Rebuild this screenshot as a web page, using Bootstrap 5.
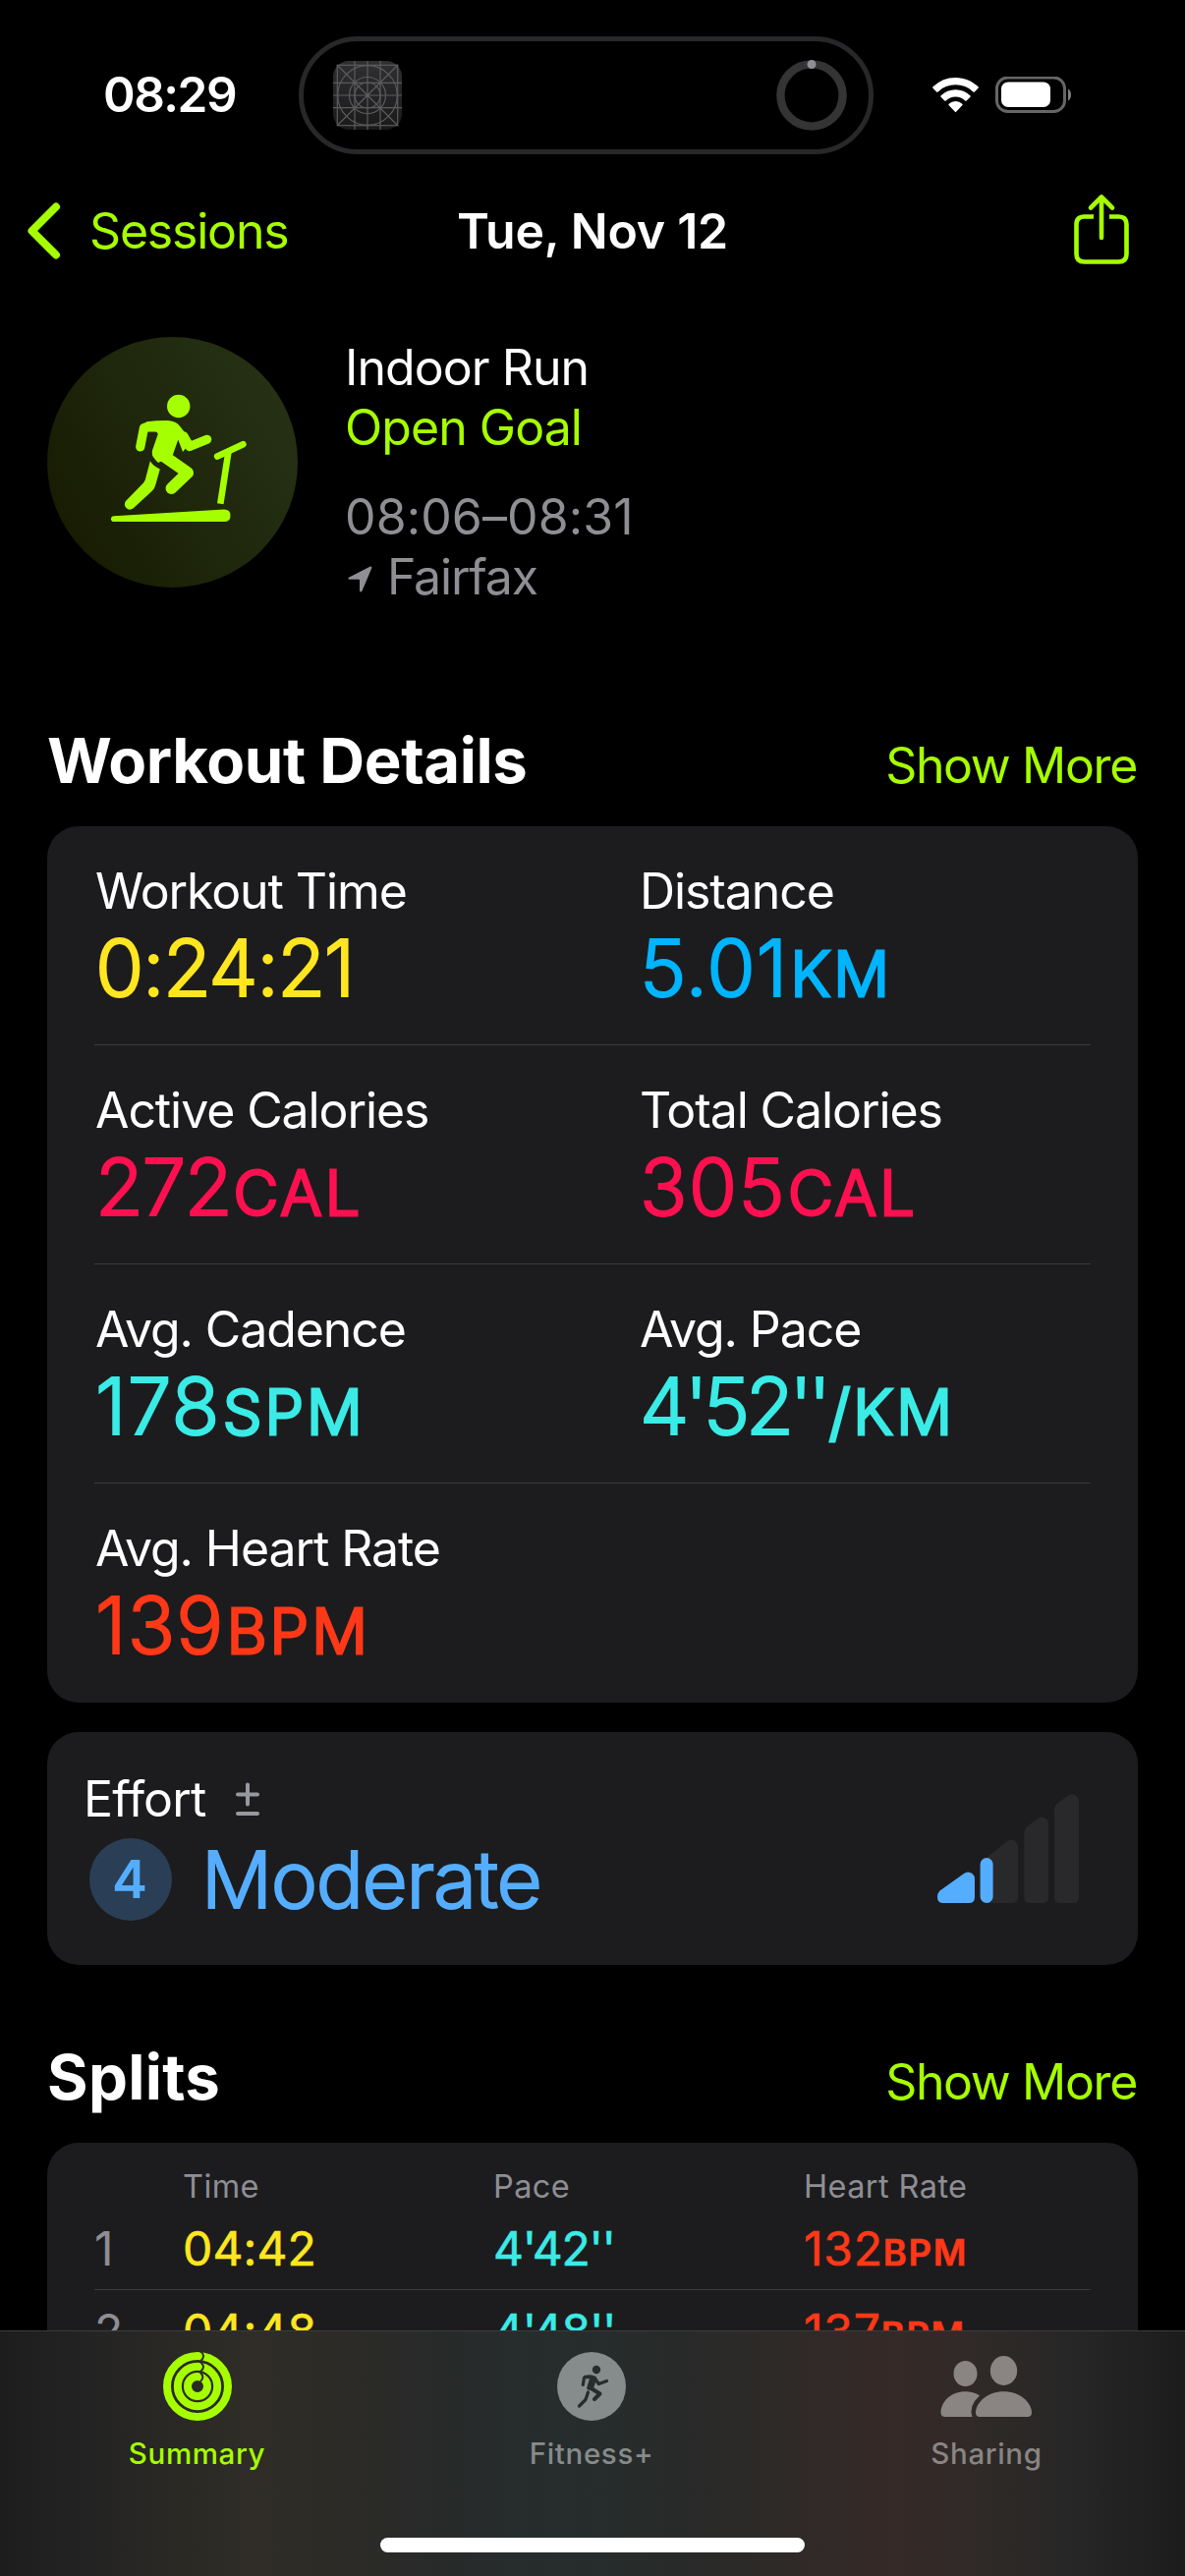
<!DOCTYPE html>
<html lang="en">
<head>
<meta charset="utf-8">
<meta name="viewport" content="width=device-width, initial-scale=1">
<title>Workout Summary</title>
<link href="https://cdn.jsdelivr.net/npm/bootstrap@5.3.0/dist/css/bootstrap.min.css" rel="stylesheet">
<style>
  :root { --lime:#a6ff00; --panel:#1c1c1e; --rule:#3a3a3c; --dim:#8e8e93; --yel:#ffe620; --blu:#00b4ff; --pink:#fe1050; --cyan:#3aebe6; --red:#ff3818; --sky:#55adff; }
  body { width:1206px; height:2622px; overflow:hidden; background:#000; color:#fff; font-family:Inter,"Liberation Sans",sans-serif; font-size:50px; line-height:61px; letter-spacing:-1.1px; white-space:nowrap; }
  svg { display:block; }
  a { text-decoration:none; }
  .c-lime { color:var(--lime); } .c-dim { color:var(--dim); } .c-yel { color:var(--yel); } .c-blu { color:var(--blu); }
  .c-pink { color:var(--pink); } .c-cyan { color:var(--cyan); } .c-red { color:var(--red); } .c-sky { color:var(--sky); }

  .statusbar { height:165px; padding-top:37px; }
  .clock { width:304px; height:120px; padding-left:105px; font-size:49.5px; letter-spacing:-1.5px; line-height:118px; }
  .island { width:585px; height:120px; border:5px solid #28282a; border-radius:60px; padding:0 22px 0 30px; }
  .signals { height:120px; padding-left:60px; }

  .topnav { height:140px; padding:0 54px 0 25px; }
  .topnav .side { width:320px; }
  .topnav .side:last-child { width:321px; }
  .back-label { margin-left:29px; letter-spacing:-1.2px; }
  .topnav .heading { letter-spacing:-.25px; margin-left:30px; }

  .hero { padding:38px 48px 0; }
  .disc { width:255px; height:255px; background:linear-gradient(60deg,#161a00 5%,#1f270c 50%,#273316 95%); }
  .hero-text { margin-left:48px; padding-top:1px; letter-spacing:-.95px; }
  .hero-time { margin-top:30px; letter-spacing:.1px; }
  .place { gap:14px; letter-spacing:-1.2px; }

  .sec { height:80px; line-height:80px; margin:0 48px 27px; }
  .sec h2 { font-size:63.5px; line-height:80px; letter-spacing:-.42px; }
  .sec a { letter-spacing:-1.35px; margin-right:1px; }
  .sec-details { margin-top:116px; }
  .sec-splits { margin-top:74px; }
  .sec-splits h2 { letter-spacing:.3px; }
  .panel { background:var(--panel); border-radius:32px; margin:0 48px; }

  .metric-row { margin:0 48px; height:223px; border-bottom:1.5px solid var(--rule); padding-top:36px; }
  .metric-row:last-child { border-bottom:0; }
  .metric-row > div:first-child { width:555px; padding-left:1px; }
  .val { height:80px; line-height:80px; margin-top:7px; }
  .num, .unit { -webkit-text-stroke:2px currentColor; stroke-linejoin:round; font-size:80px; font-weight:300; }
  .unit { -webkit-text-stroke-width:3px; font-size:63px; letter-spacing:3px; margin-left:2px; }
  .tight { letter-spacing:-1.5px; }
  .wide { letter-spacing:1.2px; }
  .pace { letter-spacing:-4.4px; }

  .effort { height:237px; margin-top:30px; padding:38px 60px 0 37px; }
  .effort-title { height:61px; gap:28px; letter-spacing:-.85px; }
  .level { width:84px; height:84px; background:#2a3f55; font-size:54px; font-weight:600; line-height:84px; letter-spacing:0; padding-right:2px; }
  .effort-row { height:84px; line-height:84px; margin-top:9px; margin-left:6px; }
  .moderate { margin-left:30px; letter-spacing:-1.35px; }
  .bars { margin-top:25px; }

  .splits { height:520px; padding:25px 48px 0; }
  .sp-head { height:41px; line-height:40px; font-size:32.5px; letter-spacing:.4px; }
  .sp-row { height:84px; line-height:84px; font-size:48px; border-bottom:1.5px solid var(--rule); letter-spacing:.1px; }
  .sp-row .px { -webkit-text-stroke:.6px currentColor; stroke-linejoin:round; }
  .s0 { width:90px; } .s1 { width:316px; } .s2 { width:316px; }
  .sp-row .s2 { letter-spacing:-1.3px; }
  .sp-row .hr-val { letter-spacing:.8px; }
  .sp-row .bpm { font-size:36.5px; font-weight:600; letter-spacing:1.6px; }

  .tabs { height:250px; border-top:1.5px solid #3c3c3e; padding-top:20px;
    background:linear-gradient(90deg,#1d1d1d 0,#232323 7%,#2f2d26 21%,#2c2b27 29%,#292a2a 36%,#262d2d 47%,#292a29 59%,#2e2a28 66%,#362928 75.5%,#2f2a28 83%,#262626 91%,#1c1c1c 100%); }
  .tabs .item { width:402px; font-size:29.5px; font-weight:500; line-height:36px; letter-spacing:.65px; }
  .tabs .item:first-child { width:401px; }
  .tabs .item svg { margin-bottom:14px; }
  .tab-fit { color:#868b8b; } .tab-share { color:#898583; }
  .homebar { width:432px; height:15px; border-radius:8px; background:#fff; bottom:24px; left:387px; }
</style>
</head>
<body>
<header>
  <div class="statusbar d-flex">
    <div class="clock fw-semibold">08:29</div>
    <div class="island d-flex align-items-center justify-content-between">
      <svg width="70" height="70" viewBox="0 0 70 70" fill="none" stroke="#5c5c5e" stroke-width="1.2">
        <defs><linearGradient id="tile" x1="0" y1="0" x2="0" y2="1"><stop offset="0" stop-color="#303032"/><stop offset="1" stop-color="#19191a"/></linearGradient></defs>
        <rect width="70" height="70" rx="16" fill="url(#tile)" stroke="none"/>
        <rect x="4.3" y="4.3" width="61.4" height="61.4"/>
        <path d="M22 0V70M35 0V70M48 0V70M0 22.3H70M0 35H70M0 47.6H70M4 4L66 66M66 4L4 66"/>
        <circle cx="35" cy="35" r="30.3"/><circle cx="35" cy="35" r="18.5"/><circle cx="35" cy="35" r="13"/>
      </svg>
      <svg width="72" height="72" viewBox="0 0 72 72"><circle cx="36" cy="36" r="31.6" fill="none" stroke="#343435" stroke-width="8.4"/><circle cx="36" cy="4.5" r="4.5" fill="#8e8e93"/></svg>
    </div>
    <div class="signals d-flex align-items-center">
      <svg width="47" height="36" viewBox="0 0 47 36" fill="#fff"><path d="M23.5 0C32.5 0 40.5 3.5 46.5 9.3a1 1 0 0 1 0 1.5l-3.6 3.6a1 1 0 0 1-1.5 0a26 26 0 0 0-35.8 0a1 1 0 0 1-1.5 0L.5 10.8a1 1 0 0 1 0-1.5A33.5 33.5 0 0 1 23.5 0z"/><path d="M23.5 12.3a21.5 21.5 0 0 1 14.9 6a1 1 0 0 1 0 1.5l-3.7 3.6a1 1 0 0 1-1.5 0a14 14 0 0 0-19.4 0a1 1 0 0 1-1.5 0l-3.7-3.6a1 1 0 0 1 0-1.5a21.5 21.5 0 0 1 14.9-6z"/><path d="M23.5 24a10 10 0 0 1 6.8 2.7a1 1 0 0 1 0 1.5l-6 6.4a1 1 0 0 1-1.6 0l-6-6.4a1 1 0 0 1 0-1.5A10 10 0 0 1 23.5 24z"/></svg>
      <svg class="ms-3" width="79" height="38" viewBox="0 0 79 38"><rect x="2.5" y="1" width="69" height="34.500" rx="11" fill="none" stroke="#666" stroke-width="3"/><rect x="7" y="5.500" width="50" height="25.500" rx="7" fill="#fff"/><path d="M75 12.500c4 1.500 4 10.500 0 12z" fill="#808080"/></svg>
    </div>
  </div>
  <nav class="topnav d-flex align-items-center justify-content-between">
    <a href="#" class="side d-flex align-items-center c-lime">
      <svg width="37" height="60" viewBox="0 0 37 60" fill="none" stroke="#a6ff00" stroke-width="8" stroke-linecap="round" stroke-linejoin="round"><path d="M32 5.5L7.5 30L32 54.5"/></svg>
      <span class="back-label">Sessions</span>
    </a>
    <div class="heading fw-semibold">Tue, Nov 12</div>
    <a href="#" class="side d-flex justify-content-end"><svg width="62" height="76" viewBox="0 0 62 76" fill="none" stroke="#a6ff00" stroke-width="4.6" stroke-linecap="round" stroke-linejoin="round"><path stroke-linecap="butt" d="M23 23.5H13.5Q5.5 23.5 5.5 31.5V61.5Q5.5 69.5 13.5 69.5H48.5Q56.5 69.5 56.5 61.5V31.5Q56.5 23.5 48.5 23.5H39"/><path d="M31 45V4M20 14.5L31 3.5L42 14.5"/></svg></a>
  </nav>
</header>

<main>
  <section class="hero d-flex">
    <div class="disc rounded-circle flex-shrink-0">
      <svg width="255" height="255" viewBox="0 0 255 255" fill="#a6ff00" stroke="#a6ff00" stroke-linecap="round" stroke-linejoin="round">
        <circle cx="133.7" cy="70.5" r="11.7" stroke="none"/>
        <path stroke="none" d="M101 86.3Q113 84.7 123 85Q132 85.5 136 92L147 106L138 117L133.3 104.5L127.5 121L113 128Q105.5 121 107 115.5L112.7 99Q112.5 96.6 110 96.6L102 96.5Z"/>
        <path fill="none" stroke-width="9.2" d="M102.5 91L98.5 92.5L94.7 112M139 101L144.9 111.5L162.7 104.3"/>
        <path fill="none" stroke-width="12" d="M113 119L117 120L143 138.2L126.5 154"/>
        <path stroke="none" d="M104.8 126.3Q108 131.5 114.8 134.5L110.3 150.5Q109.5 154 107 156.5L87.5 174.5Q83.5 177 80.5 174Q77.5 171 80 167L98 148.5Q99.8 146.5 100.2 144Z"/>
        <path fill="none" stroke-width="6.6" d="M173.2 121.5L199.4 109.2"/>
        <path fill="none" stroke-width="6.6" stroke-linecap="butt" d="M184.5 116.5L176.3 169.8"/>
        <path stroke="none" d="M68 182.3L180 175.5Q186.5 175.5 186.5 181.7Q186.5 188 180 188H68Q65 188 65 185.2Q65 182.5 68 182.3Z"/>
      </svg>
    </div>
    <div class="hero-text">
      <div>Indoor Run</div>
      <div class="c-lime">Open Goal</div>
      <div class="c-dim hero-time">08:06–08:31</div>
      <div class="c-dim place d-flex align-items-center"><svg width="29" height="31" viewBox="-3 -4 29 31" fill="#8e8e93"><path d="M1.5 11.5L22.5 .8Q24.8 0 24.2 2.5L14.5 25.5Q13 27.8 12 25.2V14.8Q12 13.8 11 13.8H1.5Q-1 13 1.5 11.5Z"/></svg><span>Fairfax</span></div>
    </div>
  </section>

  <div class="sec sec-details d-flex align-items-baseline justify-content-between">
    <h2 class="fw-bold m-0">Workout Details</h2><a href="#" class="c-lime">Show More</a>
  </div>
  <section class="panel">
    <div class="metric-row d-flex">
      <div>Workout Time<div class="val d-flex align-items-baseline c-yel"><span class="num tight">0:24:21</span></div></div>
      <div>Distance<div class="val d-flex align-items-baseline c-blu"><span class="num wide">5.01</span><span class="unit">KM</span></div></div>
    </div>
    <div class="metric-row d-flex">
      <div>Active Calories<div class="val d-flex align-items-baseline c-pink"><span class="num tight">272</span><span class="unit">CAL</span></div></div>
      <div>Total Calories<div class="val d-flex align-items-baseline c-pink"><span class="num wide">305</span><span class="unit">CAL</span></div></div>
    </div>
    <div class="metric-row d-flex">
      <div>Avg. Cadence<div class="val d-flex align-items-baseline c-cyan"><span class="num wide">178</span><span class="unit">SPM</span></div></div>
      <div>Avg. Pace<div class="val d-flex align-items-baseline c-cyan"><span class="num pace">4'52''</span><span class="unit">/KM</span></div></div>
    </div>
    <div class="metric-row d-flex">
      <div>Avg. Heart Rate<div class="val d-flex align-items-baseline c-red"><span class="num wide">139</span><span class="unit">BPM</span></div></div>
    </div>
  </section>

  <section class="panel effort d-flex justify-content-between">
    <div>
      <div class="effort-title d-flex align-items-center"><span>Effort</span>
        <svg width="28" height="36" viewBox="0 0 28 36" stroke="#98989f" stroke-width="4" stroke-linecap="round"><path d="M4 12.5H24M14 2.5V22.5M4 32H24"/></svg></div>
      <div class="effort-row d-flex align-items-center c-sky">
        <div class="level rounded-circle text-center">4</div>
        <span class="num moderate">Moderate</span>
      </div>
    </div>
    <svg class="bars" width="144" height="111" viewBox="0 0 144 111" fill="#29292b">
      <path d="M50 65L71 48Q76 45 80 49Q82 51 82 54V105Q82 111 76 111H50Z"/>
      <path d="M88.3 39Q88.3 36 91 33.5L102 25Q106 22 110.5 25Q113 27 113 31V105Q113 111 107 111H94.3Q88.3 111 88.3 105Z"/>
      <path d="M119 15Q119 12 122 9.8L133 1.5Q137-1 141.5 2Q144 4 144 8V105Q144 111 138 111H125Q119 111 119 105Z"/>
      <path fill="#55adff" d="M0 104Q0 101 2.5 98.5L27 81Q31 78 35.5 81Q38 83 38 87V105Q38 111 32 111H6Q0 111 0 105Z"/>
      <rect x="43.6" y="65" width="13" height="46" rx="6.5" fill="#55adff"/>
    </svg>
  </section>

  <div class="sec sec-splits d-flex align-items-baseline justify-content-between">
    <h2 class="fw-bold m-0">Splits</h2><a href="#" class="c-lime">Show More</a>
  </div>
  <section class="panel splits">
    <div class="sp-head d-flex c-dim"><div class="s0"></div><div class="s1">Time</div><div class="s2">Pace</div><div>Heart Rate</div></div>
    <div class="sp-row d-flex"><div class="s0 c-dim">1</div><div class="s1 px c-yel">04:42</div><div class="s2 px c-cyan">4'42''</div><div class="px hr-val c-red">132<span class="bpm">BPM</span></div></div>
    <div class="sp-row d-flex"><div class="s0 c-dim">2</div><div class="s1 px c-yel">04:48</div><div class="s2 px c-cyan">4'48''</div><div class="px hr-val c-red">137<span class="bpm">BPM</span></div></div>
  </section>
</main>

<nav class="tabs fixed-bottom d-flex">
  <a href="#" class="item d-flex flex-column align-items-center c-lime">
    <svg width="72" height="72" viewBox="0 0 72 72" fill="none" stroke="#a6ff00" stroke-width="8"><circle cx="36" cy="36" r="31"/><circle cx="36" cy="36" r="20.2"/><circle cx="36" cy="36" r="10"/>
      <path stroke="#2d2c26" stroke-width="2" d="M38.5 0Q45 4.5 39.5 10M38.5 11Q45 15.5 39.5 20.5M38.5 21.5Q44 26.5 39 31"/></svg>
    Summary</a>
  <a href="#" class="item tab-fit d-flex flex-column align-items-center">
    <svg width="72" height="72" viewBox="0 0 72 72" stroke-linecap="round" stroke-linejoin="round"><circle cx="36" cy="36" r="35" fill="#868b8b"/>
      <g fill="#262d2d" stroke="#262d2d"><circle cx="41" cy="19" r="4.2" stroke="none"/><path stroke="none" d="M28 25Q35 23.5 38 25L41 29L38 38L33 40L31 38L34 28L28 28Z"/><g fill="none" stroke-width="3.2"><path d="M34 26.5L28.5 27L27.3 34.5M39 27L43.3 33.5L51.5 30.5"/><path stroke-width="4" d="M34 37L44.5 43.5L39 49"/><path d="M32.5 42L30 49.5L23.5 56"/></g></g></svg>
    Fitness+</a>
  <a href="#" class="item tab-share d-flex flex-column align-items-center">
    <svg width="94" height="72" viewBox="0 0 94 72" fill="#8a8583"><ellipse cx="25.5" cy="23" rx="12" ry="13"/><ellipse cx="64.5" cy="20" rx="13.7" ry="15"/><path d="M40 45.2Q33.5 41.3 25.5 41.3C11 41.3 1 51 .5 62.5Q.5 67 5 67H32.5Q28.5 56 40 45.2Z"/><path d="M64.5 41.3C48 41.3 36.5 52 36 62.5Q36 67 40.5 67H88.5Q93 67 93 62.5C92.5 52 81 41.3 64.5 41.3Z"/></svg>
    Sharing</a>
  <div class="homebar position-absolute"></div>
</nav>
<script src="https://cdn.jsdelivr.net/npm/bootstrap@5.3.0/dist/js/bootstrap.bundle.min.js"></script>
</body>
</html>
